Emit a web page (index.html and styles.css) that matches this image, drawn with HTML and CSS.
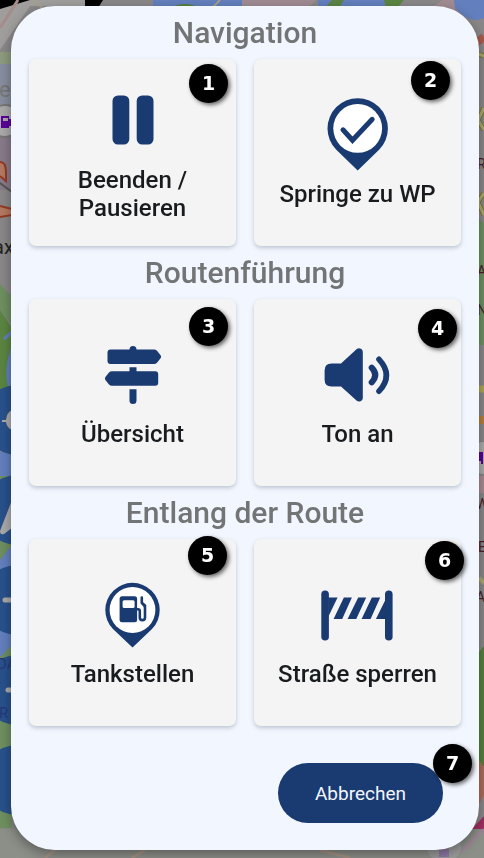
FILE: index.html
```html
<!DOCTYPE html>
<html lang="de">
<head>
<meta charset="utf-8">
<meta name="viewport" content="width=device-width, initial-scale=1">
<title>Navigation</title>
<link rel="stylesheet" href="styles.css">
</head>
<body>
<svg class="map" viewBox="0 0 484 858" preserveAspectRatio="none" aria-hidden="true">
  <rect width="484" height="858" fill="#898787"/>
  <!-- top edge -->
  <path d="M0 0H85V6H30L0 50Z" fill="#a09d9d"/>
  <path d="M0 0H30L0 9Z" fill="#000"/>
  <path d="M85 0H103L98 8H85Z" fill="#000"/>
  <path d="M153 0H242V8H153Z" fill="#637fbd"/>
  <path d="M170 8Q185 0 200 8Z" fill="#55803c"/>
  <path d="M220 0L212 8M34 0L44 10" stroke="#a5a08c" stroke-width="2"/>
  <path d="M242 0H316L308 8H242Z" fill="#a08b92"/>
  <path d="M318 0H385V8H318Z" fill="#637fbd"/>
  <path d="M332 0L325 8H339L344 0ZM384 0H404L397 8H386Z" fill="#5b8542"/>
  <path d="M432 8L442 0H455V14Z" fill="#a08b92"/>
  <path d="M454 0H484V18Q470 25 455 8Z" fill="#637fbd"/>
  <!-- left edge -->
  <path d="M18 0L0 28" stroke="#a58c8a" stroke-width="3"/>
  <path d="M0 52H14V64H0Z" fill="#8e9b7e"/>
  <path d="M0 64H12V115H0Z" fill="#888e9f"/>
  <path d="M0 130H12V190H0Z" fill="#877a89"/>
  <text x="-1" y="97" class="map-place">e</text>
  <circle cx="5" cy="121" r="16" fill="#aaa" stroke="#777" stroke-width="2"/>
  <path d="M1 116h8v12h-8zM9 119h3v7h-3z" fill="#5b009b"/>
  <path d="M3 118h5v3h-5z" fill="#aaa"/>
  <path d="M0 162Q6 162 6 172V181L0 176M0 206L12 209V215L0 217" fill="#b47962" stroke="#953a22" stroke-width="2"/>
  <path d="M0 183L12 192" stroke="#555" stroke-width="2"/>
  <text x="-7" y="254" class="map-town">ax</text>
  <path d="M0 284L12 297V325L0 310Z" fill="#6e8f60"/>
  <path d="M0 310L12 328V390H0Z" fill="#5b8542"/>
  <path d="M12 345Q3 370 8 386H12Z" fill="#637fbd"/>
  <path d="M4 339L12 332" stroke="#637fbd" stroke-width="3"/>
  <rect y="454" width="12" height="374" fill="#6e8f60"/>
  <path d="M0 452H12V476H0ZM0 560L12 545V645L0 657Z" fill="#637fbd"/>
  <g fill="#29518a">
    <circle cx="17" cy="420" r="35"/>
    <circle cx="17" cy="510" r="35"/>
    <circle cx="17" cy="600" r="35"/>
    <circle cx="17" cy="690" r="35"/>
    <circle cx="17" cy="780" r="35"/>
  </g>
  <path d="M2 420H6Q7 412 12 410V430Q7 428 6 422H2ZM12 500V528L4 534Q0 535 0 531Z" fill="#aaa"/>
  <path d="M5 600H12M8 690H12" stroke="#aaa" stroke-width="5" stroke-linecap="round"/>
  <text x="-3" y="669" class="map-district">DA</text>
  <text x="-1" y="718" class="map-district">R</text>
  <path d="M0 829H484V858H0Z" fill="#8c8e88"/>
  <path d="M55 850L45 858M145 850L132 858M320 850L350 858" stroke="#a29184" stroke-width="3"/>
  <!-- right edge -->
  <path d="M476 43L484 37" stroke="#a85a4b" stroke-width="8"/>
  <path d="M476 53L484 56M484 108L478 120L484 130M484 193L478 202L484 215M478 245L484 238" stroke="#77733b" stroke-width="5" fill="none"/>
  <path d="M476 53L484 56M484 108L478 120L484 130M484 193L478 202L484 215M478 245L484 238" stroke="#aaa86a" stroke-width="3" fill="none"/>
  <path d="M479 218L484 224V345H479Z" fill="#6e8f60"/>
  <path d="M479 389H484" stroke="#aaa552" stroke-width="7"/>
  <path d="M479 420H484" stroke="#b67d3e" stroke-width="8"/>
  <circle cx="484" cy="458" r="16" fill="#aaa"/>
  <path d="M478 452h5v12h-2v-3h-3z" fill="#5b009b"/>
  <path d="M479 476H484V493H479Z" fill="#a78a91"/>
  <g class="map-label">
    <text x="477" y="169">R</text>
    <text x="477" y="276">A</text>
    <text x="477" y="315">N</text>
    <text x="476" y="509">W</text>
    <text x="478" y="552">E</text>
    <text x="476" y="602">A</text>
  </g>
  <path d="M479 578L484 583M479 664L484 670" stroke="#aaa86a" stroke-width="4"/>
  <path d="M479 652L484 646V766H479Z" fill="#55803c"/>
  <path d="M479 760L484 767V795L479 804Z" fill="#ac6b58"/>
  <path d="M472 829L484 816V829Z" fill="#9e2d61"/>
  <path d="M484 829L462 852" stroke="#a2809a" stroke-width="2"/>
  <circle cx="444" cy="846" r="17" fill="#999"/>
  <path d="M439 849h10v8h-10z" fill="#8b76a3"/>
</svg>

<main class="dialog" role="dialog" aria-label="Navigation">
  <section class="group">
    <h2 class="title">Navigation</h2>
    <div class="tiles">
      <button class="tile" type="button">
        <svg class="icon" viewBox="0 0 72 72" aria-hidden="true">
          <rect x="15.5" y="11.5" width="16.8" height="49" rx="5.5"/>
          <rect x="39.7" y="11.5" width="16.8" height="49" rx="5.5"/>
        </svg>
        <span class="label">Beenden / Pausieren</span>
        <span class="badge badge-1">1</span>
      </button>
      <button class="tile" type="button">
        <svg class="icon" viewBox="0 0 72 72" aria-hidden="true">
          <path d="M35.7 72.5L14.3 51.8A30.2 30.2 0 1 1 57.1 51.8Z"/>
          <circle cx="35.7" cy="30.4" r="24.4" fill="#fff"/>
          <path d="M21 31.8L30.5 42.2L50.2 21.3" class="line check"/>
        </svg>
        <span class="label">Springe zu WP</span>
        <span class="badge badge-2">2</span>
      </button>
    </div>
  </section>

  <section class="group">
    <h2 class="title">Routenführung</h2>
    <div class="tiles">
      <button class="tile" type="button">
        <svg class="icon" viewBox="0 0 72 72" aria-hidden="true">
          <path d="M32.5 11.5A3.5 3.5 0 0 1 39.5 11.5H57Q58.8 11.5 60 12.8L63.6 17.3Q64.7 18.8 63.6 20.3L60 24.7Q58.8 26 57 26H13.5Q10.5 26 10.5 23V14.5Q10.5 11.5 13.5 11.5Z"/>
          <path d="M32.5 29.3H39.5V33.3H58.2Q61.2 33.3 61.2 36.3V44.7Q61.2 47.7 58.2 47.7H15Q13.2 47.7 12 46.4L8.4 42Q7.3 40.5 8.4 39L12 34.6Q13.2 33.3 15 33.3H32.5Z"/>
          <path d="M32.5 51.2H39.5V62.5A3.5 3.5 0 0 1 32.5 62.5Z"/>
        </svg>
        <span class="label">Übersicht</span>
        <span class="badge badge-3">3</span>
      </button>
      <button class="tile" type="button">
        <svg class="icon" viewBox="0 0 72 72" aria-hidden="true">
          <path d="M9.5 25.5H19L34.5 11.2Q36.7 9.5 39 10.8Q40.8 11.7 40.8 14V60Q40.8 62 39 63Q36.7 64.3 34.5 62.5L19 48.5H9.5Q2.6 48.5 2.6 41.5V32.5Q2.6 25.5 9.5 25.5Z"/>
          <path d="M49.7 29.7Q56.7 37 49.7 44.3" class="line wave-near"/>
          <path d="M57 21.3Q71.8 37.2 57 53.2" class="line wave-far"/>
        </svg>
        <span class="label">Ton an</span>
        <span class="badge badge-4">4</span>
      </button>
    </div>
  </section>

  <section class="group">
    <h2 class="title">Entlang der Route</h2>
    <div class="tiles">
      <button class="tile" type="button">
        <svg class="icon" viewBox="0 0 72 72" aria-hidden="true">
          <path d="M35.5 69.6L16 51A27.2 27.2 0 1 1 55 51Z"/>
          <circle cx="35.5" cy="32" r="22.9" fill="#fff"/>
          <rect x="22.6" y="18.3" width="17.5" height="26" rx="2.5"/>
          <rect x="25.6" y="22.3" width="12" height="7.8" rx="1.5" fill="#fff"/>
          <path d="M40 31.3H41Q42.8 31.3 42.8 33.3V39.5A2.6 2.6 0 0 0 48 39.5V30Q48 28.2 46.8 27L44.8 25V19.5M44.8 24.8L48 27.7V31" class="line hose"/>
        </svg>
        <span class="label">Tankstellen</span>
        <span class="badge badge-5">5</span>
      </button>
      <button class="tile" type="button">
        <svg class="icon" viewBox="0 0 72 72" aria-hidden="true">
          <rect x="-0.7" y="12.5" width="7.6" height="50" rx="3.8"/>
          <rect x="63" y="12.5" width="7.6" height="50" rx="3.8"/>
          <path d="M6.4 19.5H15.6L6.4 38.5ZM21.9 19.5H29.9L20.2 41H11.6ZM36.2 19.5H44.2L34.2 41H25.6ZM49.9 19.5H58.2L48.6 41H39.6ZM63.6 21.5V41H53.9Z"/>
        </svg>
        <span class="label">Straße sperren</span>
        <span class="badge badge-6">6</span>
      </button>
    </div>
  </section>

  <footer class="actions">
    <button class="cancel" type="button">Abbrechen<span class="badge badge-7">7</span></button>
  </footer>
</main>
</body>
</html>
```

FILE: styles.css
```css
* {
  box-sizing: border-box;
}

body {
  margin: 0;
  padding: 6px 5px 8px 11px;
  background: #898787;
  font-family: Roboto, "Noto Sans", sans-serif;
}

.map {
  position: fixed;
  inset: 0;
  width: 100%;
  height: 100%;
}

.map-place {
  font-size: 22px;
  fill: #777;
}

.map-town {
  font-size: 20px;
  fill: #222;
}

.map-district {
  font-size: 15px;
  fill: #243a78;
}

.map-label {
  font-size: 14px;
  fill: #4b2028;
}

.dialog {
  position: relative;
  padding: 0 18px 27px;
  border-radius: 44px;
  background: #f2f7ff;
  box-shadow: 0 4px 12px rgba(0, 0, 0, 0.35);
}

.title {
  margin: 0;
  color: #737475;
  font-size: 30px;
  font-weight: 500;
  line-height: 53px;
  text-align: center;
}

.tiles {
  display: grid;
  grid-template-columns: 1fr 1fr;
  gap: 18px;
}

.tile {
  position: relative;
  display: flex;
  flex-direction: column;
  align-items: center;
  justify-content: center;
  gap: 10px;
  min-height: 187px;
  padding: 16px;
  border: 0;
  border-radius: 7px;
  background: #f4f4f4;
  box-shadow: 0 2px 4px rgba(40, 50, 70, 0.25);
  color: #191c1f;
  font: inherit;
  font-size: 24px;
  font-weight: 500;
  line-height: 28px;
}

.label {
  max-width: 160px;
}

.icon {
  width: 72px;
  height: 72px;
  overflow: visible;
  fill: #1a3a72;
}

.line {
  fill: none;
  stroke: #1a3a72;
  stroke-linecap: round;
}

.check {
  stroke-width: 5;
}

.wave-near {
  stroke-width: 6;
}

.wave-far {
  stroke-width: 5.6;
}

.hose {
  stroke-width: 2.6;
}

.badge {
  position: absolute;
  width: 39px;
  height: 39px;
  border-radius: 50%;
  background: #000;
  box-shadow: 2px 2px 4px rgba(0, 0, 0, 0.6);
  color: #fff;
  font: bold 19px/39px "DejaVu Sans", sans-serif;
  text-align: center;
}

.badge-1 { top: 5px; right: 8px; }
.badge-2 { top: 2px; right: 11px; }
.badge-3 { top: 8px; right: 8px; }
.badge-4 { top: 10px; right: 4px; }
.badge-5 { top: -3px; right: 9px; }
.badge-6 { top: 2px; right: -3px; }
.badge-7 { top: -19px; right: -29px; }

.actions {
  display: flex;
  justify-content: flex-end;
  padding: 37px 18px 0;
}

.cancel {
  position: relative;
  min-width: 165px;
  height: 60px;
  border: 0;
  border-radius: 30px;
  background: #1a3a72;
  color: #f2f7ff;
  font: inherit;
  font-size: 19px;
}
```
